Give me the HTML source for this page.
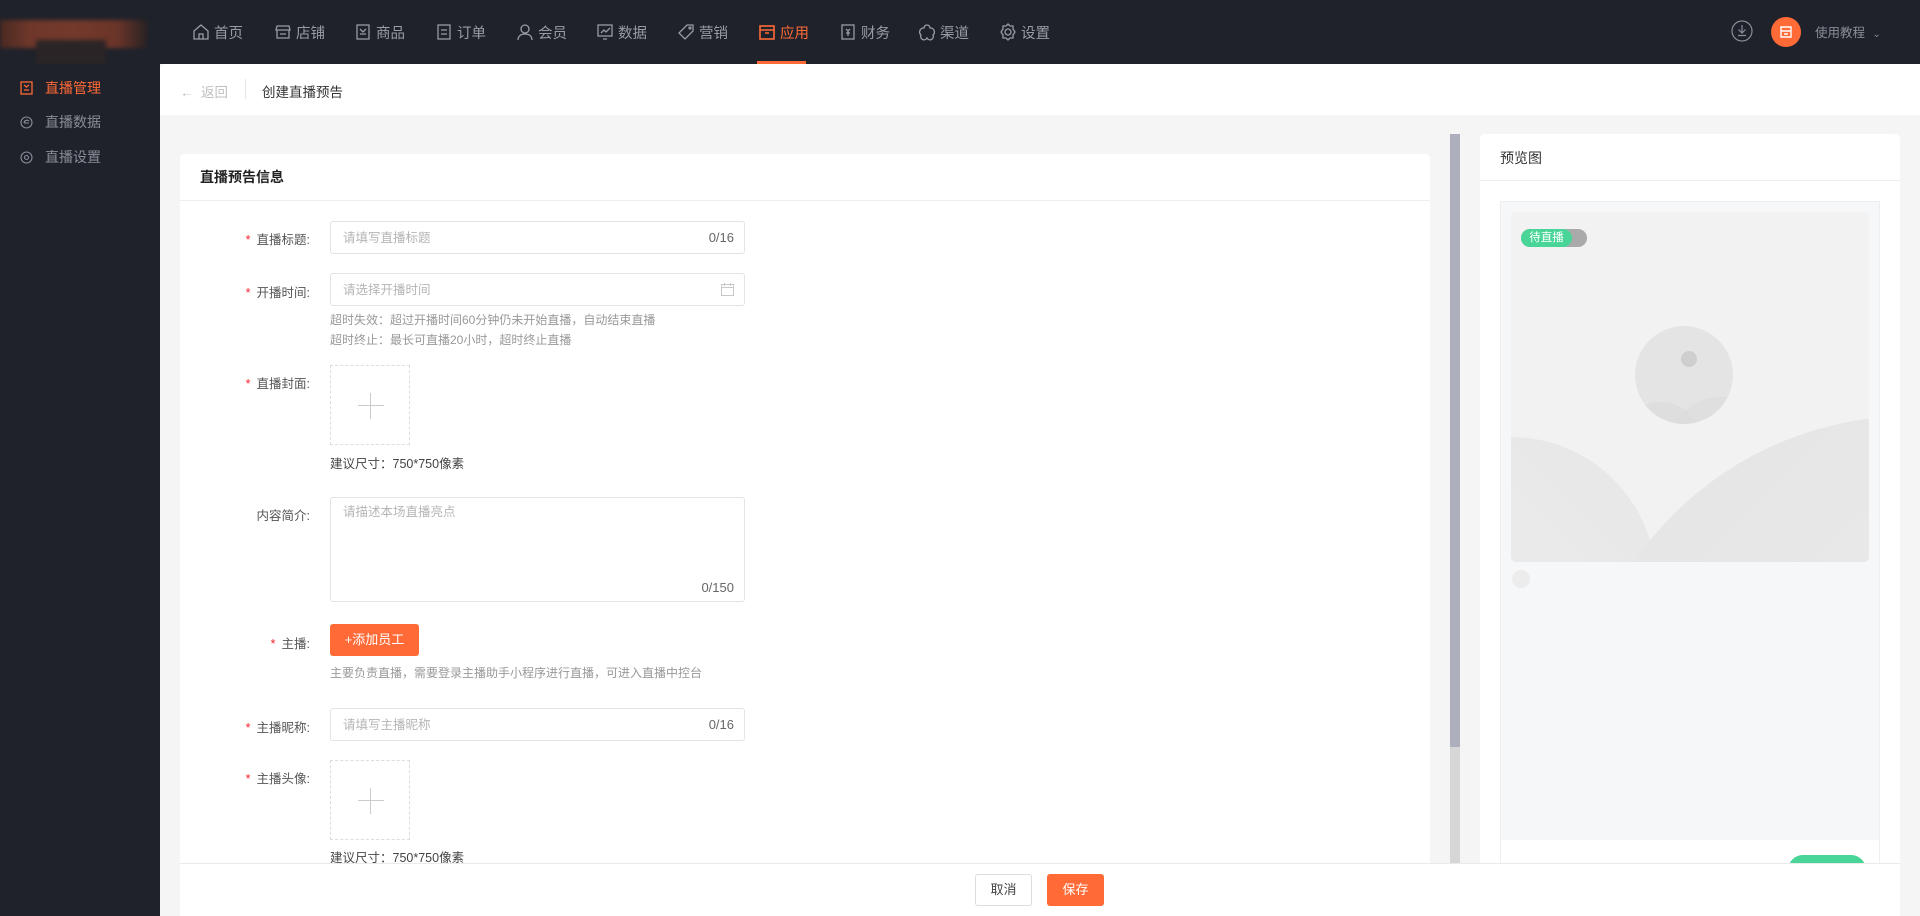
<!DOCTYPE html>
<html><head><meta charset="utf-8"><style>
*{box-sizing:border-box;margin:0;padding:0}
body{width:1920px;height:916px;overflow:hidden;background:#f5f5f5;font-family:"Liberation Sans","Noto Sans CJK SC",sans-serif;position:relative;font-size:13px;color:#333}
.top{position:absolute;left:0;top:0;width:1920px;height:64px;background:#1f222b}
.side{position:absolute;left:0;top:64px;width:160px;height:852px;background:#1f222b}
.nav{position:absolute;top:22px;display:flex;align-items:center;color:#9a9ca3;font-size:14.5px;height:20px}
.nav svg{width:18px;height:18px;margin-right:4px}
.abs{position:absolute}
.lab{position:absolute;right:1610px;font-size:12.5px;color:#555;white-space:nowrap}
.lab b{color:#f5222d;font-weight:normal;margin-right:6px}
.inp{position:absolute;left:330px;width:415px;height:33px;border:1px solid #e3e3e3;border-radius:3px;color:#b5b5b5;font-size:12.5px;padding:0 12px;line-height:31px}
.cnt{position:absolute;right:10px;top:0;color:#666;font-size:13px}
.hint{position:absolute;left:330px;font-size:12px;color:#999;white-space:nowrap}
.up{position:absolute;left:330px;width:80px;height:80px;border:1px dashed #ddd}
.up:before{content:"";position:absolute;left:27px;top:39px;width:26px;height:1px;background:#ccc}
.up:after{content:"";position:absolute;left:39px;top:27px;width:1px;height:26px;background:#ccc}
.tip{position:absolute;left:330px;font-size:12.5px;color:#444}
</style></head><body>
<div class="top">
 <div class="abs" style="left:0;top:20px;width:147px;height:28px;background:linear-gradient(90deg,#4a2a22,#6e372a 20%,#743a2c 50%,#6a3428 80%,#2a2224);filter:blur(2px)"></div>
 <div class="abs" style="left:36px;top:40px;width:70px;height:24px;background:#2b2426;filter:blur(2px)"></div>
 <div class="nav" style="left:192px"><svg viewBox="0 0 18 18" fill="none" stroke="#9a9ca3" stroke-width="1.3"><path d="M2 8L9 2l7 6v8H2z M7 16v-5h4v5"/></svg>首页</div>
 <div class="nav" style="left:274px"><svg viewBox="0 0 18 18" fill="none" stroke="#9a9ca3" stroke-width="1.3"><path d="M3 3h12l1 4H2z M3 7v8h12V7 M6 11h6"/></svg>店铺</div>
 <div class="nav" style="left:354px"><svg viewBox="0 0 18 18" fill="none" stroke="#9a9ca3" stroke-width="1.3"><rect x="3" y="2" width="12" height="14"/><path d="M6 6l3 3 3-3 M6 11h6"/></svg>商品</div>
 <div class="nav" style="left:435px"><svg viewBox="0 0 18 18" fill="none" stroke="#9a9ca3" stroke-width="1.3"><rect x="3" y="2" width="12" height="14"/><path d="M6 7h6M6 11h6"/></svg>订单</div>
 <div class="nav" style="left:516px"><svg viewBox="0 0 18 18" fill="none" stroke="#9a9ca3" stroke-width="1.3"><circle cx="9" cy="6" r="4"/><path d="M2 17c0-4 3-6 7-6s7 2 7 6"/></svg>会员</div>
 <div class="nav" style="left:596px"><svg viewBox="0 0 18 18" fill="none" stroke="#9a9ca3" stroke-width="1.3"><rect x="2" y="2" width="14" height="11"/><path d="M5 10l3-3 2 2 4-4 M7 16h4"/></svg>数据</div>
 <div class="nav" style="left:677px"><svg viewBox="0 0 18 18" fill="none" stroke="#9a9ca3" stroke-width="1.3"><path d="M10 2h6v6l-8 8-6-6z"/><circle cx="13" cy="5" r="1"/></svg>营销</div>
 <div class="nav" style="left:758px;color:#ff6a36"><svg viewBox="0 0 18 18" fill="none" stroke="#ff6a36" stroke-width="1.6"><rect x="2" y="3" width="14" height="13"/><path d="M2 7h14 M7 10h4"/></svg>应用</div>
 <div class="abs" style="left:757px;top:61px;width:49px;height:3px;background:#ff6a36"></div>
 <div class="nav" style="left:839px"><svg viewBox="0 0 18 18" fill="none" stroke="#9a9ca3" stroke-width="1.3"><rect x="3" y="2" width="12" height="14"/><path d="M7 6l2 2 2-2 M9 8v5 M7 10h4"/></svg>财务</div>
 <div class="nav" style="left:918px"><svg viewBox="0 0 18 18" fill="none" stroke="#9a9ca3" stroke-width="1.3"><path d="M9 2a3 3 0 0 1 3 3 4 4 0 0 1 3 7 3 3 0 0 1-6 3 3 3 0 0 1-6-3 4 4 0 0 1 3-7 3 3 0 0 1 3-3z"/></svg>渠道</div>
 <div class="nav" style="left:999px"><svg viewBox="0 0 18 18" fill="none" stroke="#9a9ca3" stroke-width="1.3"><circle cx="9" cy="9" r="3"/><path d="M9 1l2 2h3v3l2 3-2 3v3h-3l-2 2-2-2H4v-3L2 9l2-3V3h3z"/></svg>设置</div>
 <svg class="abs" style="left:1731px;top:20px" width="22" height="22" viewBox="0 0 22 22" fill="none" stroke="#8a8d96" stroke-width="1.2"><circle cx="11" cy="11" r="10"/><path d="M11 5v8M7.5 9.5l3.5 3.5 3.5-3.5M7 15.5h8"/></svg>
 <div class="abs" style="left:1771px;top:17px;width:30px;height:30px;border-radius:50%;background:#ff6a36"></div>
 <svg class="abs" style="left:1779px;top:25px" width="14" height="14" viewBox="0 0 14 14" fill="none" stroke="#fff" stroke-width="1.4"><path d="M2 2h10v4H2z M2 6v6h10V6 M5 9h4"/></svg>
 <div class="abs" style="left:1815px;top:22px;color:#8a8d96;font-size:12.5px">使用教程 <span style="font-size:10px;margin-left:4px">&#8964;</span></div>
</div>
<div class="side">
 <div class="abs" style="left:20px;top:14px;color:#ff6a36;font-size:14px;display:flex;align-items:center"><svg width="13" height="14" viewBox="0 0 13 14" fill="none" stroke="#ff6a36" stroke-width="1.3" style="margin-right:12px"><rect x="1" y="1" width="11" height="12"/><path d="M4 4l2.5 2 2.5-2M4 9h5"/></svg>直播管理</div>
 <div class="abs" style="left:20px;top:48px;color:#8a8d96;font-size:14px;display:flex;align-items:center"><svg width="13" height="13" viewBox="0 0 13 13" fill="none" stroke="#8a8d96" stroke-width="1.1" style="margin-right:12px"><circle cx="6.5" cy="6.5" r="5.5"/><path d="M4 7h5M4 7a3 3 0 0 1 5-2"/></svg>直播数据</div>
 <div class="abs" style="left:20px;top:83px;color:#8a8d96;font-size:14px;display:flex;align-items:center"><svg width="13" height="13" viewBox="0 0 13 13" fill="none" stroke="#8a8d96" stroke-width="1.1" style="margin-right:12px"><circle cx="6.5" cy="6.5" r="5.5"/><circle cx="6.5" cy="6.5" r="2"/></svg>直播设置</div>
</div>
<div class="abs" style="left:160px;top:64px;width:1760px;height:51px;background:#fff;border-radius:6px 0 0 0"></div>
<div class="abs" style="left:180px;top:81px;font-size:13.5px;color:#c0c0c0">&#8592;&nbsp; 返回</div>
<div class="abs" style="left:245px;top:79px;width:1px;height:20px;background:#e5e5e5"></div>
<div class="abs" style="left:262px;top:81px;font-size:13.5px;color:#333">创建直播预告</div>

<div class="abs" style="left:180px;top:154px;width:1250px;height:762px;background:#fff;border-radius:4px"></div>
<div class="abs" style="left:200px;top:167px;font-size:14px;color:#222;font-weight:bold">直播预告信息</div>
<div class="abs" style="left:180px;top:200px;width:1250px;height:1px;background:#eee"></div>

<div class="lab" style="top:229px"><b>*</b>直播标题:</div>
<div class="inp" style="top:221px;line-height:33px">请填写直播标题<span class="cnt" style="line-height:31px">0/16</span></div>
<div class="lab" style="top:282px"><b>*</b>开播时间:</div>
<div class="inp" style="top:273px;line-height:33px">请选择开播时间<svg style="position:absolute;right:10px;top:9px" width="13" height="13" viewBox="0 0 13 13" fill="none" stroke="#c8c8c8"><rect x="0.5" y="1.5" width="12" height="11"/><path d="M0.5 4.5h12M3.5 0v3M9.5 0v3"/></svg></div>
<div class="hint" style="top:311px">超时失效：超过开播时间60分钟仍未开始直播，自动结束直播</div>
<div class="hint" style="top:331px">超时终止：最长可直播20小时，超时终止直播</div>
<div class="lab" style="top:373px"><b>*</b>直播封面:</div>
<div class="up" style="top:365px"></div>
<div class="tip" style="top:453px">建议尺寸：750*750像素</div>
<div class="lab" style="top:505px">内容简介:</div>
<div class="inp" style="top:497px;height:105px;line-height:18px;padding-top:5px">请描述本场直播亮点<span class="cnt" style="top:81px">0/150</span></div>
<div class="lab" style="top:633px"><b>*</b>主播:</div>
<div class="abs" style="left:330px;top:624px;width:89px;height:32px;background:#ff6a36;border-radius:3px;color:#fff;font-size:13px;text-align:center;line-height:32px">+添加员工</div>
<div class="hint" style="top:664px">主要负责直播，需要登录主播助手小程序进行直播，可进入直播中控台</div>
<div class="lab" style="top:717px"><b>*</b>主播昵称:</div>
<div class="inp" style="top:708px;line-height:33px">请填写主播昵称<span class="cnt" style="line-height:31px">0/16</span></div>
<div class="lab" style="top:768px"><b>*</b>主播头像:</div>
<div class="up" style="top:760px"></div>
<div class="tip" style="top:847px">建议尺寸：750*750像素</div>

<div class="abs" style="left:1450px;top:134px;width:10px;height:729px;background:#d6d6d6"></div>
<div class="abs" style="left:1450px;top:134px;width:10px;height:613px;background:#adafbc"></div>

<div class="abs" style="left:1480px;top:134px;width:420px;height:782px;background:#fff;border-radius:5px"></div>
<div class="abs" style="left:1500px;top:148px;font-size:14px;color:#333">预览图</div>
<div class="abs" style="left:1480px;top:180px;width:420px;height:1px;background:#eee"></div>
<div class="abs" style="left:1500px;top:201px;width:380px;height:715px;border:1px solid #eceef0;background:#f6f7f9"></div>
<div class="abs" style="left:1501px;top:840px;width:378px;height:76px;background:#fff"></div>
<div class="abs" style="left:1788px;top:855px;width:78px;height:30px;border-radius:15px;background:#48d597"></div>
<svg class="abs" style="left:1511px;top:212px" width="358" height="350" viewBox="0 0 358 350">
 <defs><clipPath id="c"><rect width="358" height="350" rx="5"/></clipPath><clipPath id="m"><circle cx="173" cy="163" r="49"/></clipPath>
 <linearGradient id="g1" x1="0" y1="1" x2="1" y2="0"><stop offset="0" stop-color="#f0f0f0"/><stop offset="1" stop-color="#e6e6e6"/></linearGradient>
 <linearGradient id="g2" x1="1" y1="1" x2="0" y2="0"><stop offset="0" stop-color="#eeeeee"/><stop offset="1" stop-color="#e4e4e4"/></linearGradient></defs>
 <g clip-path="url(#c)">
 <rect width="358" height="350" fill="#f2f2f2"/>
 <circle cx="0" cy="370" r="145" fill="url(#g1)"/>
 <circle cx="400" cy="540" r="336" fill="url(#g2)" opacity="0.95"/>
 <circle cx="173" cy="163" r="49" fill="#e4e4e4"/>
 <g clip-path="url(#m)">
 <circle cx="150" cy="230" r="40" fill="#dadada" opacity="0.6"/>
 <circle cx="210" cy="240" r="55" fill="#dcdcdc" opacity="0.6"/>
 </g>
 <circle cx="178" cy="147" r="8" fill="#cfcfcf"/>
 </g></svg>
<div class="abs" style="left:1521px;top:229px;width:66px;height:18px;border-radius:9px;background:#aaa"></div>
<div class="abs" style="left:1521px;top:229px;width:51px;height:18px;border-radius:9px;background:#48d597;color:#fff;font-size:11.5px;line-height:18px;text-align:center">待直播</div>
<div class="abs" style="left:1512px;top:570px;width:18px;height:18px;border-radius:50%;background:#ececec"></div>

<div class="abs" style="left:180px;top:863px;width:1720px;height:53px;background:#fff;border-top:1px solid #eaeaea"></div>
<div class="abs" style="left:975px;top:874px;width:57px;height:32px;border:1px solid #ddd;border-radius:3px;font-size:13px;color:#444;text-align:center;line-height:30px;background:#fff">取消</div>
<div class="abs" style="left:1047px;top:874px;width:57px;height:32px;border-radius:3px;font-size:13px;color:#fff;text-align:center;line-height:32px;background:#ff6a36">保存</div>
</body></html>
